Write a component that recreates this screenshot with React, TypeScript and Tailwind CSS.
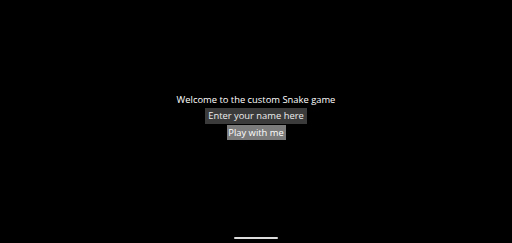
import React from "react";

export default function App() {
  return (
    <div className="relative flex h-[243px] w-[512px] flex-col items-center bg-black pt-[92px] text-white" style={{ fontFamily: '"Open Sans", "Noto Sans", sans-serif' }}>
      <p className="h-[16px] whitespace-nowrap text-[9.4px] leading-[16px]">Welcome to the custom Snake game</p>
      <div className="flex h-[16px] w-[102px] items-center justify-center whitespace-nowrap bg-[#3b3b3b] text-[9.4px] leading-[16px] text-[#ededed]">
        Enter your name here
      </div>
      <button className="mt-[1px] flex h-[15px] w-[59px] items-center justify-center whitespace-nowrap bg-[#7b7b7b] text-[9.4px] leading-[15px] text-white">
        Play with me
      </button>
      <div className="absolute bottom-[4px] left-[234px] h-[2px] w-[44px] rounded-full bg-[#dcdcdc]" />
    </div>
  );
}
